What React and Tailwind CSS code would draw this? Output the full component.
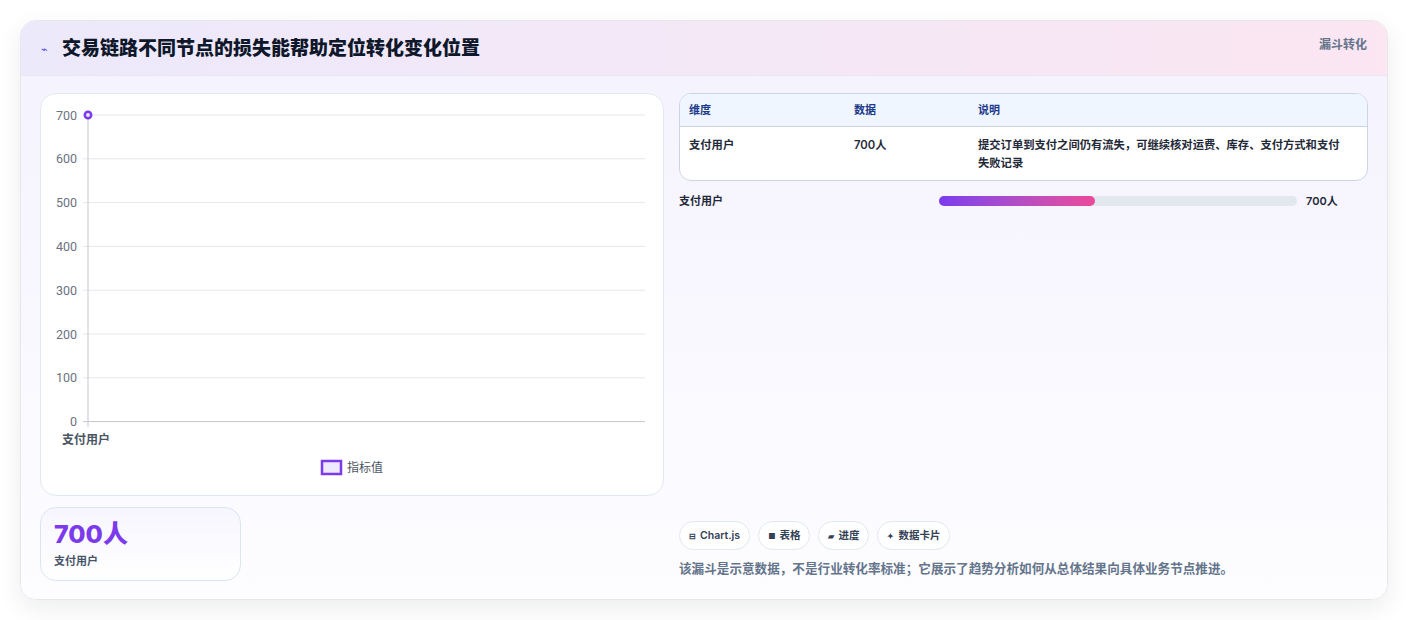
import React from 'react';

const ticks = [700, 600, 500, 400, 300, 200, 100, 0];

const Chart = () => (
  <div className="relative h-[404px] rounded-2xl border border-[#e2e8f0] bg-white">
    <svg width="622" height="404" className="absolute left-0 top-0">
      {ticks.map((t, i) => {
        const y = 21 + i * 43.8;
        return (
          <g key={t}>
            <line x1="42" x2="604" y1={y} y2={y} stroke={t === 0 ? '#c4c7cf' : '#e5e7eb'} strokeWidth="1" />
            <text x="36" y={y + 4.5} textAnchor="end" fontSize="12.5" fill="#6b7280" fontFamily="Roboto, sans-serif">{t}</text>
          </g>
        );
      })}
      <line x1="47" x2="47" y1="21" y2="333" stroke="#c4c7cf" />
      <circle cx="47" cy="21" r="3.2" fill="#ede9fe" stroke="#7c3aed" strokeWidth="2.5" />
      <text x="21" y="350" fontSize="12" fontWeight="600" fill="#4b5563" fontFamily="'Noto Sans CJK SC', sans-serif">支付用户</text>
      <rect x="281" y="367" width="19" height="13" fill="#ede9fe" stroke="#7c3aed" strokeWidth="2.5" />
      <text x="306" y="378" fontSize="12" fill="#4b5563" fontFamily="'Noto Sans CJK SC', sans-serif">指标值</text>
    </svg>
  </div>
);

const Chip = ({ icon, label }) => (
  <span className="flex h-[29px] items-center gap-1 rounded-full border border-[#e2e8f0] bg-white px-[9px] text-[10.5px] font-semibold text-[#334155]">
    <span className="text-[8px]">{icon}</span>
    {label}
  </span>
);

export default function App() {
  return (
    <div className="min-h-[620px] bg-white p-5" style={{ fontFamily: "Inter, 'Noto Sans CJK SC', sans-serif" }}>
      <div className="overflow-hidden rounded-2xl border border-[#e5e7eb] shadow-[0_8px_24px_rgba(15,23,42,0.08)]">
        <div className="flex h-[55px] items-start justify-between border-b border-[#e9e5f5] bg-gradient-to-r from-[#ece9fb] to-[#fbe6f2] px-5">
          <div className="flex items-center gap-[9px] pt-[14px]">
            <span className="w-[12px] text-[11px] text-[#4f46e5]">⌁</span>
            <h1 className="text-[19px] font-extrabold text-[#0f172a]">交易链路不同节点的损失能帮助定位转化变化位置</h1>
          </div>
          <span className="pt-[15px] text-[12px] font-semibold text-[#64748b]">漏斗转化</span>
        </div>
        <div className="flex h-[523px] gap-[15px] bg-gradient-to-b from-[#f5f3fe] to-[#fdfdff] px-[19px] pb-[18px] pt-[17px]">
          <div className="flex w-[624px] flex-col gap-[11px]">
            <Chart />
            <div className="w-[201px] rounded-2xl border border-[#dbe4f0] bg-gradient-to-b from-[#f7f6ff] to-white px-[13px] pb-[11px] pt-[10px]">
              <div className="text-[25px] font-extrabold leading-[32px] text-[#7c3aed]">700人</div>
              <div className="mt-[3px] text-[11px] font-semibold text-[#475569]">支付用户</div>
            </div>
          </div>
          <div className="flex flex-1 flex-col">
            <div className="overflow-hidden rounded-xl border border-[#cbd5e1] bg-white text-[11px]">
              <div className="flex h-[33px] items-center border-b border-[#cbd5e1] bg-[#eff6ff] px-[9px] font-semibold text-[#1e3a8a]">
                <span className="w-[165px]">维度</span>
                <span className="w-[124px]">数据</span>
                <span>说明</span>
              </div>
              <div className="flex px-[9px] pb-[8px] pt-[9px] text-[11.3px] font-semibold leading-[18px] text-[#1f2937]">
                <span className="w-[165px] shrink-0">支付用户</span>
                <span className="w-[124px] shrink-0">700人</span>
                <span className="pr-2">提交订单到支付之间仍有流失，可继续核对运费、库存、支付方式和支付失败记录</span>
              </div>
            </div>
            <div className="mt-[12px] flex items-center text-[11px] font-semibold text-[#1f2937]">
              <span className="w-[260px]">支付用户</span>
              <div className="h-[10px] w-[358px] rounded-full bg-[#e2e8f0]">
                <div className="h-full rounded-full bg-gradient-to-r from-[#7c3aed] to-[#ec4899]" style={{ width: '43.6%' }} />
              </div>
              <span className="ml-[9px]">700人</span>
            </div>
            <div className="mt-auto flex gap-[8px]">
              <Chip icon="⊟" label="Chart.js" />
              <Chip icon="■" label="表格" />
              <Chip icon="▰" label="进度" />
              <Chip icon="✦" label="数据卡片" />
            </div>
            <p className="mt-[10px] mb-[2px] text-[12.6px] font-semibold text-[#64748b]">该漏斗是示意数据，不是行业转化率标准；它展示了趋势分析如何从总体结果向具体业务节点推进。</p>
          </div>
        </div>
      </div>
    </div>
  );
}
